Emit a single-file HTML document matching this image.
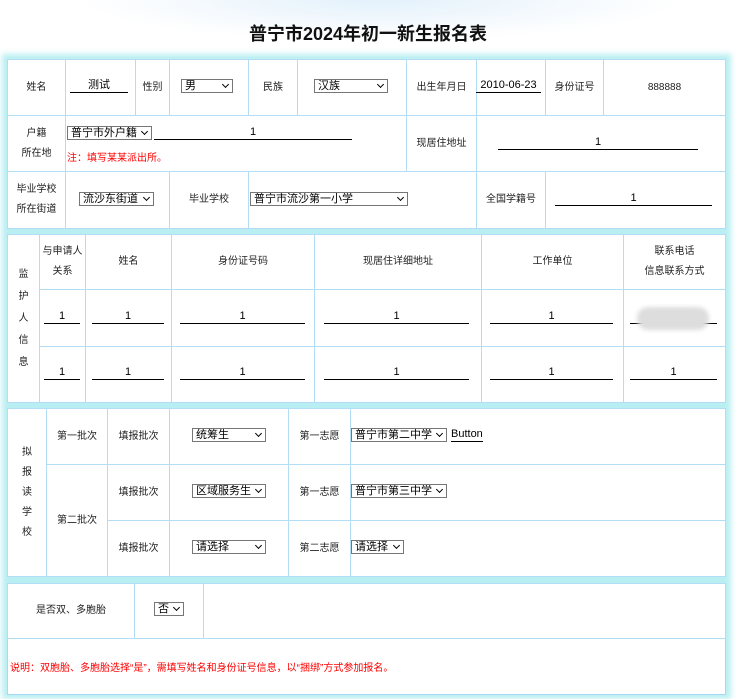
<!DOCTYPE html>
<html><head><meta charset="utf-8"><style>
*{box-sizing:border-box;margin:0;padding:0}
body{width:736px;height:699px;position:relative;overflow:hidden;background:#fff;font-family:"Liberation Sans","Noto Sans CJK SC",sans-serif;font-size:10px;color:#222}
.bgtop{position:absolute;left:0;top:0;width:736px;height:60px;background:radial-gradient(ellipse 300px 40px at 380px 0,#e3f1fb,#fff)}
.cy{position:absolute;background:#b9eff2}
.box{position:absolute;background:#fff;border:1px solid #a8d8f3}
.c{position:absolute;border:1px solid #b3dcf5;display:flex;align-items:center;justify-content:center;text-align:center;line-height:20px;background:transparent}
.a{position:absolute;white-space:nowrap}
.ul{position:absolute;border-bottom:1px solid #000;text-align:center;font-size:11px;line-height:14px;height:15px;color:#000}
.sel{position:absolute;border:1px solid #767676;font-size:11px;line-height:12px;padding-left:3px;background:#fff;color:#000;white-space:nowrap;overflow:hidden}
.sel:after{content:"";position:absolute;right:4px;top:2px;width:4px;height:4px;border-right:1.5px solid #000;border-bottom:1.5px solid #000;transform:rotate(45deg);background:#fff;box-shadow:2px 2px 0 3px #fff}
.red{color:#f00}
</style></head><body>
<div class="bgtop"></div>
<div class="a" style="left:0;width:736px;top:20px;text-align:center;font-size:18px;font-weight:bold;color:#111">普宁市2024年初一新生报名表</div>
<div class="cy" style="left:2px;top:54px;width:729px;height:645px;filter:blur(3px)"></div>

<div class="box" style="left:7px;top:59px;width:719px;height:170px"></div>
<div class="c" style="left:7px;top:59px;width:59px;height:57px">姓名</div>
<div class="c" style="left:65px;top:59px;width:71px;height:57px"></div>
<div class="c" style="left:135px;top:59px;width:35px;height:57px">性别</div>
<div class="c" style="left:169px;top:59px;width:80px;height:57px"></div>
<div class="c" style="left:248px;top:59px;width:50px;height:57px">民族</div>
<div class="c" style="left:297px;top:59px;width:110px;height:57px"></div>
<div class="c" style="left:406px;top:59px;width:71px;height:57px">出生年月日</div>
<div class="c" style="left:476px;top:59px;width:70px;height:57px"></div>
<div class="c" style="left:545px;top:59px;width:59px;height:57px">身份证号</div>
<div class="c" style="left:603px;top:59px;width:123px;height:57px">888888</div>
<div class="ul" style="left:70px;top:78px;width:58px">测试</div>
<div class="sel" style="left:181px;top:79px;width:52px;height:14px">男</div>
<div class="sel" style="left:314px;top:79px;width:74px;height:14px">汉族</div>
<div class="ul" style="left:476px;top:78px;width:65px">2010-06-23</div>

<div class="c" style="left:7px;top:115px;width:59px;height:57px;line-height:20px">户籍<br>所在地</div>
<div class="c" style="left:65px;top:115px;width:342px;height:57px"></div>
<div class="c" style="left:406px;top:115px;width:71px;height:57px">现居住地址</div>
<div class="c" style="left:476px;top:115px;width:250px;height:57px"></div>
<div class="sel" style="left:67px;top:126px;width:85px;height:14px">普宁市外户籍</div>
<div class="ul" style="left:154px;top:125px;width:198px">1</div>
<div class="a red" style="left:67px;top:149px">注：填写某某派出所。</div>
<div class="ul" style="left:498px;top:135px;width:200px">1</div>

<div class="c" style="left:7px;top:171px;width:59px;height:58px">毕业学校<br>所在街道</div>
<div class="c" style="left:65px;top:171px;width:105px;height:58px"></div>
<div class="c" style="left:169px;top:171px;width:80px;height:58px">毕业学校</div>
<div class="c" style="left:248px;top:171px;width:229px;height:58px"></div>
<div class="c" style="left:476px;top:171px;width:70px;height:58px">全国学籍号</div>
<div class="c" style="left:545px;top:171px;width:181px;height:58px"></div>
<div class="sel" style="left:79px;top:192px;width:75px;height:14px">流沙东街道</div>
<div class="sel" style="left:250px;top:192px;width:158px;height:14px">普宁市流沙第一小学</div>
<div class="ul" style="left:555px;top:191px;width:157px">1</div>

<div class="box" style="left:7px;top:234px;width:719px;height:169px"></div>
<div class="c" style="left:7px;top:234px;width:33px;height:169px;line-height:22px">监<br>护<br>人<br>信<br>息</div>
<div class="c" style="left:39px;top:234px;width:47px;height:56px">与申请人<br>关系</div>
<div class="c" style="left:85px;top:234px;width:87px;height:56px">姓名</div>
<div class="c" style="left:171px;top:234px;width:144px;height:56px">身份证号码</div>
<div class="c" style="left:314px;top:234px;width:168px;height:56px">现居住详细地址</div>
<div class="c" style="left:481px;top:234px;width:143px;height:56px">工作单位</div>
<div class="c" style="left:623px;top:234px;width:103px;height:56px">联系电话<br>信息联系方式</div>
<div class="c" style="left:39px;top:289px;width:47px;height:58px"></div><div class="c" style="left:85px;top:289px;width:87px;height:58px"></div><div class="c" style="left:171px;top:289px;width:144px;height:58px"></div><div class="c" style="left:314px;top:289px;width:168px;height:58px"></div><div class="c" style="left:481px;top:289px;width:143px;height:58px"></div><div class="c" style="left:623px;top:289px;width:103px;height:58px"></div>
<div class="c" style="left:39px;top:346px;width:47px;height:57px"></div><div class="c" style="left:85px;top:346px;width:87px;height:57px"></div><div class="c" style="left:171px;top:346px;width:144px;height:57px"></div><div class="c" style="left:314px;top:346px;width:168px;height:57px"></div><div class="c" style="left:481px;top:346px;width:143px;height:57px"></div><div class="c" style="left:623px;top:346px;width:103px;height:57px"></div>
<div class="ul" style="left:44px;top:309px;width:36px">1</div><div class="ul" style="left:92px;top:309px;width:72px">1</div><div class="ul" style="left:180px;top:309px;width:125px">1</div><div class="ul" style="left:324px;top:309px;width:145px">1</div><div class="ul" style="left:490px;top:309px;width:123px">1</div><div class="ul" style="left:630px;top:309px;width:87px"></div>
<div class="a" style="left:637px;top:307px;width:72px;height:23px;background:#ddd;border-radius:11px;filter:blur(2px)"></div>
<div class="ul" style="left:44px;top:365px;width:36px">1</div><div class="ul" style="left:92px;top:365px;width:72px">1</div><div class="ul" style="left:180px;top:365px;width:125px">1</div><div class="ul" style="left:324px;top:365px;width:145px">1</div><div class="ul" style="left:490px;top:365px;width:123px">1</div><div class="ul" style="left:630px;top:365px;width:87px">1</div>

<div class="box" style="left:7px;top:408px;width:719px;height:169px"></div>
<div class="c" style="left:7px;top:408px;width:40px;height:169px;line-height:20px">拟<br>报<br>读<br>学<br>校</div>
<div class="c" style="left:46px;top:408px;width:62px;height:57px">第一批次</div>
<div class="c" style="left:46px;top:464px;width:62px;height:113px">第二批次</div>
<div class="c" style="left:107px;top:408px;width:63px;height:57px">填报批次</div>
<div class="c" style="left:107px;top:464px;width:63px;height:57px">填报批次</div>
<div class="c" style="left:107px;top:520px;width:63px;height:57px">填报批次</div>
<div class="c" style="left:169px;top:408px;width:120px;height:57px"></div><div class="c" style="left:169px;top:464px;width:120px;height:57px"></div><div class="c" style="left:169px;top:520px;width:120px;height:57px"></div>
<div class="c" style="left:288px;top:408px;width:63px;height:57px">第一志愿</div>
<div class="c" style="left:288px;top:464px;width:63px;height:57px">第一志愿</div>
<div class="c" style="left:288px;top:520px;width:63px;height:57px">第二志愿</div>
<div class="c" style="left:350px;top:408px;width:376px;height:57px"></div><div class="c" style="left:350px;top:464px;width:376px;height:57px"></div><div class="c" style="left:350px;top:520px;width:376px;height:57px"></div>
<div class="sel" style="left:192px;top:428px;width:74px;height:14px">统筹生</div>
<div class="sel" style="left:192px;top:484px;width:74px;height:14px">区域服务生</div>
<div class="sel" style="left:192px;top:540px;width:74px;height:14px">请选择</div>
<div class="sel" style="left:351px;top:428px;width:96px;height:14px">普宁市第二中学</div>
<div class="a" style="left:451px;top:428px;font-size:11px;color:#000;border-bottom:1px solid #000;line-height:13px">Button</div>
<div class="sel" style="left:351px;top:484px;width:96px;height:14px">普宁市第三中学</div>
<div class="sel" style="left:351px;top:540px;width:53px;height:14px">请选择</div>

<div class="box" style="left:7px;top:583px;width:719px;height:112px"></div>
<div class="c" style="left:7px;top:583px;width:128px;height:56px">是否双、多胞胎</div>
<div class="c" style="left:134px;top:583px;width:70px;height:56px"></div>
<div class="c" style="left:203px;top:583px;width:523px;height:56px"></div>
<div class="sel" style="left:154px;top:602px;width:30px;height:14px">否</div>
<div class="a red" style="left:10px;top:659px">说明：双胞胎、多胞胎选择“是”，需填写姓名和身份证号信息，以“捆绑”方式参加报名。</div>
</body></html>
